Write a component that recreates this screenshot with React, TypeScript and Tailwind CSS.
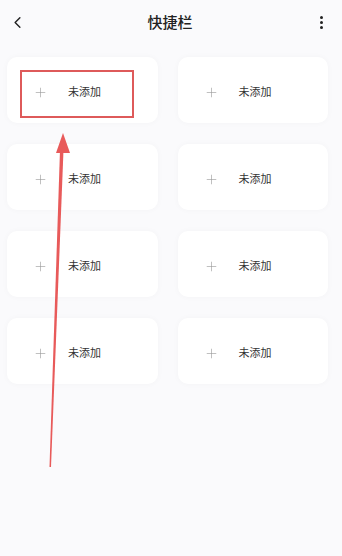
import { ChevronLeft, Plus } from 'lucide-react';

const slots = Array.from({ length: 8 }, (_, i) => i);

const Slot = () => (
  <div className="flex h-[66px] items-center rounded-[10px] bg-white pt-[4px] shadow-[0_0_6px_rgba(0,0,0,0.03)]">
    <Plus size={15} strokeWidth={1} className="ml-[26px] text-[#9a9a9a]" />
    <span className="ml-[20px] text-[11px] text-[#333333]">未添加</span>
  </div>
);

export default function App() {
  return (
    <div
      className="relative h-[556px] w-[342px] overflow-hidden bg-[#fafafc]"
      style={{ fontFamily: '"Noto Sans", "Noto Sans CJK SC", sans-serif' }}
    >
      {/* Header */}
      <div className="flex h-11 items-center pl-[8px] pr-[10px]">
        <div className="flex flex-1">
          <ChevronLeft size={19} strokeWidth={1.8} className="text-[#222222]" />
        </div>
        <span className="text-[15px] font-medium text-[#222222]">快捷栏</span>
        <div className="flex flex-1 justify-end">
          <div className="mr-[9px] flex flex-col gap-[2px]">
            <span className="h-[3px] w-[3px] rounded-full bg-[#222222]" />
            <span className="h-[3px] w-[3px] rounded-full bg-[#222222]" />
            <span className="h-[3px] w-[3px] rounded-full bg-[#222222]" />
          </div>
        </div>
      </div>

      {/* Slots */}
      <div className="grid grid-cols-2 gap-x-5 gap-y-[21px] pl-[7px] pr-[14px] pt-[13px]">
        {slots.map((i) => (
          <Slot key={i} />
        ))}
      </div>

      {/* Annotation: highlight box */}
      <div className="absolute left-[20px] top-[70px] h-[48px] w-[114px] border-2 border-[#de5a5a]" />

      {/* Annotation: arrow */}
      <svg className="absolute left-0 top-0" width="342" height="556" viewBox="0 0 342 556">
        <polygon points="49.5,467 51,467 63.5,150 60,150" fill="#e85a5a" />
        <polygon points="63,133 56,153 70,153" fill="#e85a5a" />
      </svg>
    </div>
  );
}
